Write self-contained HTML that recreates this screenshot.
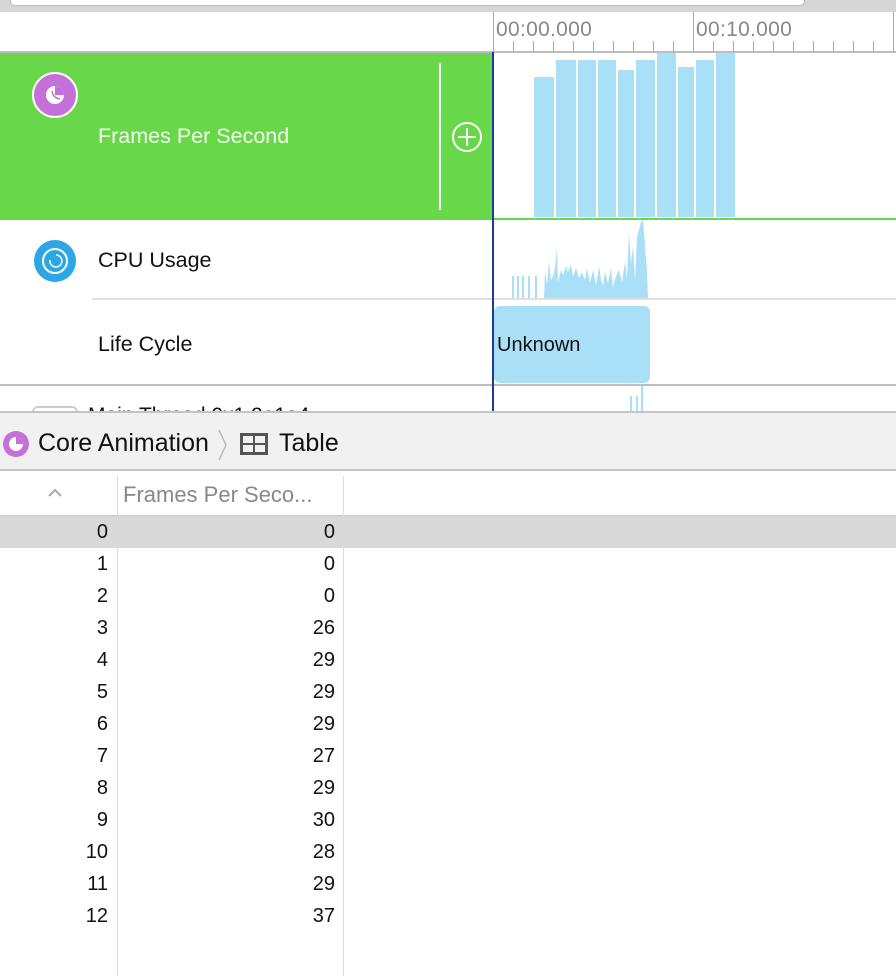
<!DOCTYPE html>
<html><head><meta charset="utf-8"><style>
*{margin:0;padding:0;box-sizing:border-box}
body{width:896px;height:976px;overflow:hidden;background:#fff;font-family:"Liberation Sans",sans-serif;position:relative}
.a{position:absolute}
.num{position:absolute;font-size:20px;color:#111;text-align:right}
</style></head><body>
<div class="a" style="left:0;top:0;width:896px;height:12px;background:#d6d6d6"></div>
<div class="a" style="left:10px;top:-6px;width:795px;height:12px;background:#fff;border:1px solid #bbb;border-radius:5px"></div>
<div class="a" style="left:0;top:51px;width:896px;height:2px;background:#bdbdbd"></div>
<svg class="a" style="left:0;top:0" width="896" height="976">
<g stroke="#aaa" stroke-width="1">
<line x1="493.5" y1="12" x2="493.5" y2="52"/><line x1="693.5" y1="12" x2="693.5" y2="52"/><line x1="893.5" y1="12" x2="893.5" y2="52"/>
<line x1="513.5" y1="41" x2="513.5" y2="52"/><line x1="533.5" y1="41" x2="533.5" y2="52"/><line x1="553.5" y1="41" x2="553.5" y2="52"/><line x1="573.5" y1="41" x2="573.5" y2="52"/><line x1="593.5" y1="41" x2="593.5" y2="52"/><line x1="613.5" y1="41" x2="613.5" y2="52"/><line x1="633.5" y1="41" x2="633.5" y2="52"/><line x1="653.5" y1="41" x2="653.5" y2="52"/><line x1="673.5" y1="41" x2="673.5" y2="52"/>
<line x1="713.5" y1="41" x2="713.5" y2="52"/><line x1="733.5" y1="41" x2="733.5" y2="52"/><line x1="753.5" y1="41" x2="753.5" y2="52"/><line x1="773.5" y1="41" x2="773.5" y2="52"/><line x1="793.5" y1="41" x2="793.5" y2="52"/><line x1="813.5" y1="41" x2="813.5" y2="52"/><line x1="833.5" y1="41" x2="833.5" y2="52"/><line x1="853.5" y1="41" x2="853.5" y2="52"/><line x1="873.5" y1="41" x2="873.5" y2="52"/>
</g>
<text x="496" y="36" font-size="21" letter-spacing="0.3" fill="#888" font-family="Liberation Sans">00:00.000</text>
<text x="696" y="36" font-size="21" letter-spacing="0.3" fill="#888" font-family="Liberation Sans">00:10.000</text>
</svg>
<div class="a" style="left:0;top:53px;width:493px;height:167px;background:#68d84a"></div>
<div class="a" style="left:32px;top:72px;width:46px;height:46px;border-radius:50%;background:#c56fd8;border:2px solid #fff"></div>
<svg class="a" style="left:32px;top:72px" width="46" height="46"><circle cx="23" cy="23" r="9" fill="#fff"/><path d="M23 14 A9 9 0 0 1 32 23 L23 23 Z" fill="#c56fd8"/><path d="M20 19 Q21 26 28 27" stroke="#c56fd8" stroke-width="1.5" fill="none"/></svg>
<div class="a" style="left:98px;top:124px;font-size:21.5px;color:#f2fbee">Frames Per Second</div>
<div class="a" style="left:439px;top:63px;width:2px;height:147px;background:#fff"></div>
<div class="a" style="left:452px;top:122px;width:30px;height:30px;border-radius:50%;border:2px solid #fff"></div>
<div class="a" style="left:466px;top:128px;width:2px;height:18px;background:#fff"></div>
<div class="a" style="left:458px;top:136px;width:18px;height:2px;background:#fff"></div>
<div class="a" style="left:493px;top:218px;width:403px;height:2px;background:#68d84a"></div>
<svg class="a" style="left:0;top:0" width="896" height="420">
<g fill="#aadff8">
<rect x="534" y="77" width="20" height="140"/><rect x="556" y="60" width="20" height="157"/><rect x="578" y="60" width="18" height="157"/><rect x="598" y="60" width="18" height="157"/><rect x="618" y="70" width="16" height="147"/><rect x="636" y="60" width="19" height="157"/><rect x="657" y="53" width="19" height="164"/><rect x="678" y="67" width="16" height="150"/><rect x="696" y="60" width="18" height="157"/><rect x="716" y="53" width="19" height="164"/>
<rect x="512" y="276" width="2" height="23"/><rect x="517" y="276" width="2" height="23"/><rect x="522" y="276" width="2" height="23"/><rect x="528" y="276" width="2" height="23"/><rect x="535" y="276" width="2" height="23"/>
<polygon points="544,299 545,270 547,285 549,262 551,280 553,276 555,268 557,248 558,282 561,270 563,275 566,266 568,272 571,264 573,276 576,268 579,278 582,272 585,280 587,268 590,283 593,270 596,285 599,266 601,280 603,286 605,272 608,283 611,268 613,287 616,276 619,270 622,282 625,262 627,278 629,232 631,264 633,246 635,280 637,236 639,230 641,222 643,220 645,246 647,270 648,299"/>
<rect x="630" y="396" width="2" height="16"/><rect x="636" y="396" width="2" height="16"/><rect x="641" y="384" width="2" height="28"/>
</g>
<rect x="494" y="306" width="156" height="77" rx="6" fill="#aadff8"/>
</svg>
<div class="a" style="left:34px;top:240px;width:42px;height:42px;border-radius:50%;background:#2da6e6"></div>
<svg class="a" style="left:34px;top:240px" width="42" height="42"><circle cx="21" cy="21" r="12" stroke="#fff" stroke-width="2" fill="none"/><path d="M16 20 A6 6 0 1 0 22 15" stroke="#fff" stroke-width="1.5" fill="none"/></svg>
<div class="a" style="left:98px;top:248px;font-size:21.5px;color:#111">CPU Usage</div>
<div class="a" style="left:92px;top:298px;width:804px;height:2px;background:#e0e0e0"></div>
<div class="a" style="left:98px;top:332px;font-size:21.5px;color:#111">Life Cycle</div>
<div class="a" style="left:497px;top:334px;font-size:20px;color:#111">Unknown</div>
<div class="a" style="left:0;top:384px;width:896px;height:2px;background:#bdbdbd"></div>
<div class="a" style="left:32px;top:406px;width:46px;height:12px;border:2px solid #ccc;border-radius:6px 6px 0 0"></div>
<div class="a" style="left:88px;top:405px;font-size:21px;color:#111;height:7px;overflow:hidden;line-height:21px">Main Thread 0x1 2e1a4</div>
<div class="a" style="left:492px;top:52px;width:2px;height:360px;background:#1a3a9c"></div>
<div class="a" style="left:0;top:411px;width:896px;height:60px;background:#f1f1f1;border-top:2px solid #c4c4c4;border-bottom:2px solid #c4c4c4"></div>
<div class="a" style="left:3px;top:431px;width:26px;height:26px;border-radius:50%;background:#c56fd8"></div>
<svg class="a" style="left:3px;top:431px" width="26" height="26"><circle cx="13" cy="13" r="7" fill="#fff"/><path d="M13 6 A7 7 0 0 1 20 13 L13 13Z" fill="#c56fd8"/></svg>
<div class="a" style="left:38px;top:429px;font-size:25px;color:#111">Core Animation</div>
<svg class="a" style="left:216px;top:428px" width="14" height="34"><path d="M3 2 L10 17 L3 32" stroke="#bbb" stroke-width="1.5" fill="none"/></svg>
<svg class="a" style="left:240px;top:433px" width="28" height="22"><rect x="0" y="0" width="28" height="22" fill="#555"/><rect x="3" y="3" width="10" height="7" fill="#f1f1f1"/><rect x="15" y="3" width="10" height="7" fill="#f1f1f1"/><rect x="3" y="12" width="10" height="7" fill="#f1f1f1"/><rect x="15" y="12" width="10" height="7" fill="#f1f1f1"/></svg>
<div class="a" style="left:279px;top:429px;font-size:25px;color:#111">Table</div>
<div class="a" style="left:0;top:515px;width:896px;height:2px;background:#d0d0d0"></div>
<svg class="a" style="left:47px;top:488px" width="16" height="10"><path d="M2 8 L8 2 L14 8" stroke="#aaa" stroke-width="2" fill="none"/></svg>
<div class="a" style="left:123px;top:482px;font-size:22px;color:#888">Frames Per Seco...</div>
<div class="a" style="left:117px;top:476px;width:1px;height:500px;background:#ddd"></div>
<div class="a" style="left:343px;top:476px;width:1px;height:500px;background:#ddd"></div>
<div class="a" style="left:0;top:517px;width:896px;height:31px;background:#d9d9d9"></div>
<div class="num" style="right:788px;top:521px">0</div><div class="num" style="right:561px;top:521px">0</div>
<div class="num" style="right:788px;top:553px">1</div><div class="num" style="right:561px;top:553px">0</div>
<div class="num" style="right:788px;top:585px">2</div><div class="num" style="right:561px;top:585px">0</div>
<div class="num" style="right:788px;top:617px">3</div><div class="num" style="right:561px;top:617px">26</div>
<div class="num" style="right:788px;top:649px">4</div><div class="num" style="right:561px;top:649px">29</div>
<div class="num" style="right:788px;top:681px">5</div><div class="num" style="right:561px;top:681px">29</div>
<div class="num" style="right:788px;top:713px">6</div><div class="num" style="right:561px;top:713px">29</div>
<div class="num" style="right:788px;top:745px">7</div><div class="num" style="right:561px;top:745px">27</div>
<div class="num" style="right:788px;top:777px">8</div><div class="num" style="right:561px;top:777px">29</div>
<div class="num" style="right:788px;top:809px">9</div><div class="num" style="right:561px;top:809px">30</div>
<div class="num" style="right:788px;top:841px">10</div><div class="num" style="right:561px;top:841px">28</div>
<div class="num" style="right:788px;top:873px">11</div><div class="num" style="right:561px;top:873px">29</div>
<div class="num" style="right:788px;top:905px">12</div><div class="num" style="right:561px;top:905px">37</div>
</body></html>
